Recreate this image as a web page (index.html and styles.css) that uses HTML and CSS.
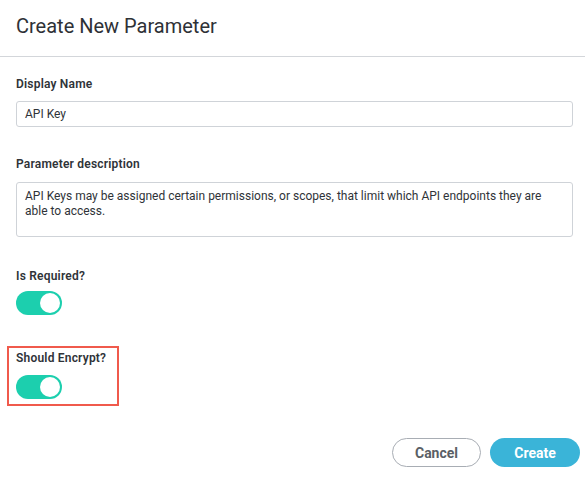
FILE: index.html
```html
<!DOCTYPE html>
<html>
<head>
<meta charset="utf-8">
<link rel="stylesheet" href="styles.css">
</head>
<body>
<div class="modal">
  <div class="header">Create New Parameter</div>
  <div class="body">
    <div class="field">
      <label class="label">Display Name</label>
      <div class="input">API Key</div>
    </div>
    <div class="field">
      <label class="label">Parameter description</label>
      <div class="textarea">API Keys may be assigned certain permissions, or scopes, that limit which API endpoints they are able to access.</div>
    </div>
    <div class="field toggle-field">
      <label class="label">Is Required?</label>
      <div class="toggle"><span class="knob"></span></div>
    </div>
    <div class="field toggle-field highlight">
      <label class="label">Should Encrypt?</label>
      <div class="toggle"><span class="knob"></span></div>
    </div>
  </div>
  <div class="footer">
    <button class="btn cancel">Cancel</button>
    <button class="btn create">Create</button>
  </div>
</div>
</body>
</html>
```
FILE: styles.css
```css
* { box-sizing: border-box; }
html, body { margin: 0; padding: 0; background: #fff; }
body { font-family: Roboto, "Liberation Sans", sans-serif; color: #2f3338; width: 585px; height: 481px; overflow: hidden; }
.header {
  font-size: 20px;
  color: #2e3136;
  padding: 14px 16px 0;
  height: 57px;
  border-bottom: 1px solid #d3d6da;
  line-height: 24px;
}
.body { padding: 20px 12px 0 16px; }
.field { display: flex; flex-direction: column; }
.label { font-size: 12px; font-weight: 600; color: #2f3338; line-height: 14px; letter-spacing: 0.2px; }
.input {
  margin-top: 10px;
  height: 26px;
  border: 1px solid #cfd3d8;
  border-radius: 3px;
  font-size: 12px;
  padding: 0 8px;
  line-height: 24px;
  color: #2f3338;
}
.field + .field { margin-top: 30px; }
.textarea {
  margin-top: 11px;
  height: 55px;
  border: 1px solid #cfd3d8;
  border-radius: 3px;
  font-size: 12px;
  padding: 6px 8px;
  line-height: 15px;
  color: #2f3338;
}
.field.toggle-field:nth-child(3) { margin-top: 32px; }
.toggle-field .toggle { margin-top: 8px; }
.toggle {
  width: 46px;
  height: 24px;
  border-radius: 12px;
  background: #1ccfae;
  position: relative;
}
.knob {
  position: absolute;
  right: 2px;
  top: 2px;
  width: 20px;
  height: 20px;
  border-radius: 50%;
  background: #fff;
}
.field.highlight {
  margin-top: 31px;
  margin-left: -9px;
  width: 112px;
  padding: 3px 0 5px 7px;
  border: 2px solid #f05a4c;
}
.highlight .toggle { margin-top: 10px; }
.footer {
  display: flex;
  justify-content: flex-end;
  gap: 9px;
  padding: 32px 5px 0 0;
}
.btn {
  height: 29px;
  border-radius: 15px;
  font-family: Roboto, "Liberation Sans", sans-serif;
  font-size: 14px;
  font-weight: 700;
  cursor: pointer;
}
.cancel { width: 89px; background: #fff; border: 1px solid #a8adb4; color: #5a5f66; }
.create { width: 90px; background: #3ab4d8; border: none; color: #fff; }
```
